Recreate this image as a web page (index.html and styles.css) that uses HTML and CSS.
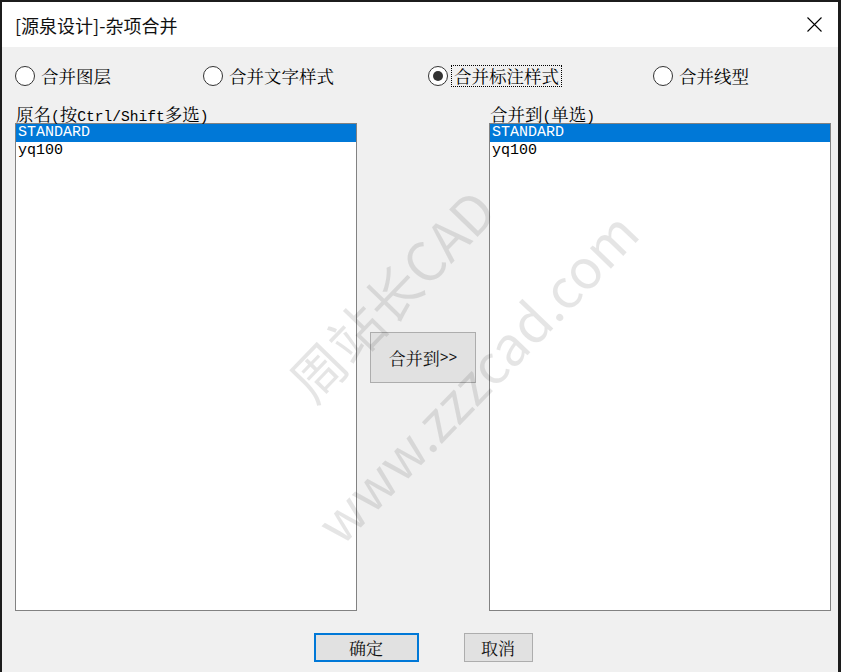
FILE: index.html
```html
<!DOCTYPE html>
<html lang="zh-CN">
<head>
<meta charset="utf-8">
<title>[源泉设计]-杂项合并</title>
<link rel="stylesheet" href="styles.css">
</head>
<body>
<div class="dialog">
  <div class="titlebar">
    <span class="title">[源泉设计]-杂项合并</span>
    <svg class="close" width="15" height="15" viewBox="0 0 15 15"><path d="M0.5 0.5L14.5 14.5M14.5 0.5L0.5 14.5" stroke="#000" stroke-width="1.1" fill="none"/></svg>
  </div>
  <div class="body">
    <div class="radios">
      <div class="radio"><span class="circle"></span><span class="rlabel">合并图层</span></div>
      <div class="radio"><span class="circle"></span><span class="rlabel">合并文字样式</span></div>
      <div class="radio"><span class="circle checked"></span><span class="rlabel focus">合并标注样式</span></div>
      <div class="radio"><span class="circle"></span><span class="rlabel">合并线型</span></div>
    </div>
    <div class="lists">
      <div class="col">
        <div class="cap">原名<span class="en">(</span>按<span class="en">Ctrl/Shift</span>多选<span class="en">)</span></div>
        <div class="listbox">
          <div class="item sel">STANDARD</div>
          <div class="item">yq100</div>
        </div>
      </div>
      <div class="mid">
        <div class="btn merge">合并到<span class="en">&gt;&gt;</span></div>
      </div>
      <div class="col">
        <div class="cap">合并到<span class="en">(</span>单选<span class="en">)</span></div>
        <div class="listbox">
          <div class="item sel">STANDARD</div>
          <div class="item">yq100</div>
        </div>
      </div>
    </div>
    <div class="actions">
      <div class="btn ok">确定</div>
      <div class="btn cancel">取消</div>
    </div>
  </div>
  <div class="watermark">
    <div class="wm-line">周站长CAD</div>
    <div class="wm-line">www.zzzcad.com</div>
  </div>
</div>
</body>
</html>
```

FILE: styles.css
```css
html, body {
  margin: 0;
  padding: 0;
}
body {
  background: #1c1c1c;
  width: 841px;
  height: 672px;
  overflow: hidden;
  font-family: "Noto Serif CJK SC", "Noto Sans CJK SC", sans-serif;
  color: #000;
}
.dialog {
  position: relative;
  margin: 2px 3px 0 2px;
  width: 836px;
  height: 670px;
  background: #f0f0f0;
  overflow: hidden;
}
.titlebar {
  height: 45px;
  background: #fff;
  display: flex;
  align-items: center;
  justify-content: space-between;
  padding: 0 16px 0 13px;
}
.title {
  font-family: "Noto Sans CJK SC", sans-serif;
  font-size: 18px;
  color: #111;
}
.close {
  display: block;
}
.body {
  padding: 19px 7px 0 13px;
}
.radios {
  display: grid;
  grid-template-columns: 188px 225px 225px 1fr;
  height: 20px;
  align-items: center;
}
.radio {
  display: flex;
  align-items: center;
  gap: 4px;
}
.circle {
  width: 20px;
  height: 20px;
  box-sizing: border-box;
  border: 1px solid #333;
  border-radius: 50%;
  background: #fff;
  display: flex;
  align-items: center;
  justify-content: center;
  flex: none;
}
.circle.checked::after {
  content: "";
  width: 10px;
  height: 10px;
  border-radius: 50%;
  background: #333;
}
.rlabel {
  font-size: 17.5px;
  line-height: 20px;
  padding: 0 2px;
}
.rlabel.focus {
  outline: 1px dotted #000;
  outline-offset: 0px;
}
.lists {
  margin-top: 18px;
  display: flex;
  align-items: center;
}
.col {
  width: 342px;
  flex: none;
}
.cap {
  height: 19px;
  line-height: 19px;
  font-size: 17.5px;
  padding-left: 1px;
  white-space: nowrap;
}
.en {
  font-family: "Liberation Mono", monospace;
  font-size: 14.6px;
}
.listbox {
  height: 488px;
  box-sizing: border-box;
  border: 1px solid #828282;
  background: #fff;
}
.item {
  height: 18px;
  line-height: 18px;
  padding-left: 2px;
  font-family: "Liberation Mono", monospace;
  font-size: 15px;
  color: #000;
}
.item.sel {
  background: #0078d7;
  color: #fff;
}
.mid {
  width: 132px;
  flex: none;
  display: flex;
  justify-content: center;
}
.btn {
  box-sizing: border-box;
  background: #e1e1e1;
  border: 1px solid #adadad;
  display: flex;
  align-items: center;
  justify-content: center;
  font-size: 17px;
  color: #111;
}
.merge {
  width: 106px;
  height: 51px;
}
.actions {
  margin-top: 22px;
  display: flex;
  justify-content: center;
  gap: 45px;
}
.ok {
  width: 105px;
  height: 29px;
  border: 2px solid #0078d7;
}
.cancel {
  width: 69px;
  height: 29px;
}
.watermark {
  position: absolute;
  left: 171px;
  top: 215px;
  width: 520px;
  height: 236px;
  transform: rotate(-46deg);
  pointer-events: none;
  font-family: "Noto Sans CJK SC", sans-serif;
  color: rgba(0, 0, 0, 0.1);
  text-align: center;
}
.wm-line {
  height: 118px;
  line-height: 118px;
  font-size: 54px;
  white-space: nowrap;
}
```
